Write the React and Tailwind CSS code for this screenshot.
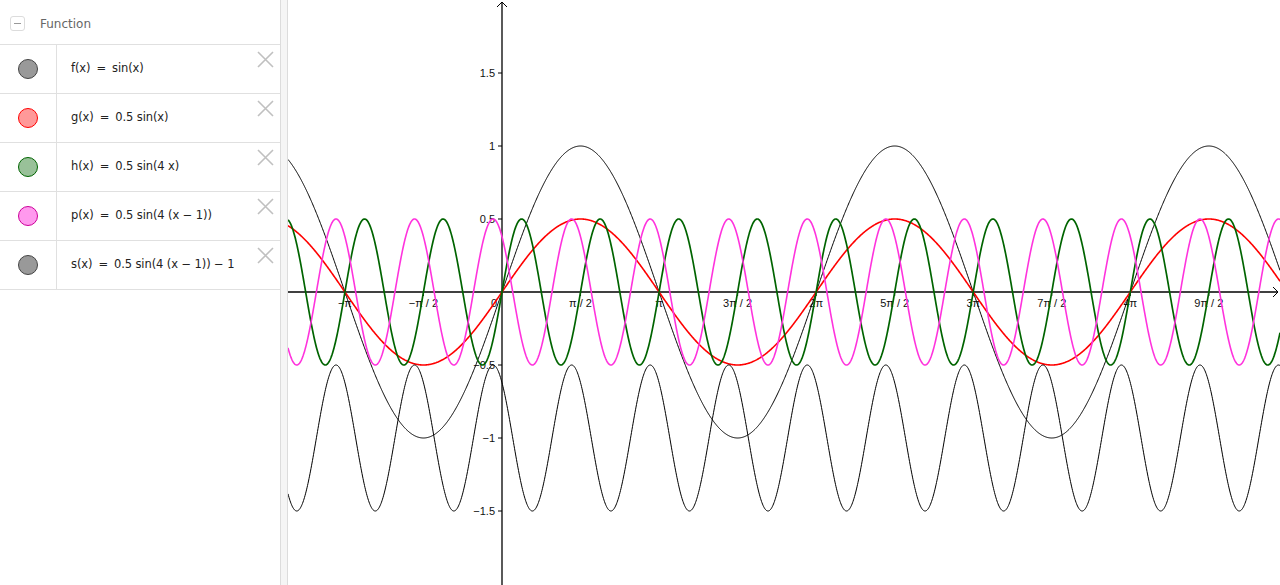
import React from 'react';

const W = 992;
const H = 585;
const OX = 214; // origin x inside the graph view
const OY = 292;
const SX = 50; // px per unit on x
const SY = 146; // px per unit on y

const funcs = [
  { lhs: 'f(x)', rhs: 'sin(x)', fn: (x) => Math.sin(x), stroke: '#000000', width: 1, fill: '#999999', border: '#444444' },
  { lhs: 'g(x)', rhs: '0.5 sin(x)', fn: (x) => 0.5 * Math.sin(x), stroke: '#ff0000', width: 1.6, fill: '#ff9999', border: '#ff0000' },
  { lhs: 'h(x)', rhs: '0.5 sin(4 x)', fn: (x) => 0.5 * Math.sin(4 * x), stroke: '#006400', width: 1.7, fill: '#99c199', border: '#006400' },
  { lhs: 'p(x)', rhs: '0.5 sin(4 (x − 1))', fn: (x) => 0.5 * Math.sin(4 * (x - 1)), stroke: '#ff33dd', width: 1.6, fill: '#ff99ee', border: '#cc0099' },
  { lhs: 's(x)', rhs: '0.5 sin(4 (x − 1)) − 1', fn: (x) => 0.5 * Math.sin(4 * (x - 1)) - 1, stroke: '#000000', width: 1, fill: '#999999', border: '#444444' },
];

function pathFor(fn) {
  let d = '';
  for (let px = 0; px <= W; px += 0.5) {
    const x = (px - OX) / SX;
    const py = OY - fn(x) * SY;
    d += (px === 0 ? 'M' : 'L') + px.toFixed(1) + ' ' + py.toFixed(2) + ' ';
  }
  return d;
}

const xLabels = ['−π', '−π / 2', '0', 'π / 2', 'π', '3π / 2', '2π', '5π / 2', '3π', '7π / 2', '4π', '9π / 2'];
const yLabels = [
  { v: 1.5, t: '1.5' },
  { v: 1, t: '1' },
  { v: 0.5, t: '0.5' },
  { v: -0.5, t: '−0.5' },
  { v: -1, t: '−1' },
  { v: -1.5, t: '−1.5' },
];

function Graph() {
  return (
    <svg width={W} height={H} className="block" style={{ fontFamily: '"Liberation Sans", Arial, sans-serif' }}>
      {/* axes */}
      <line x1="0" y1={OY} x2={W - 2} y2={OY} stroke="#000" strokeWidth="1.3" />
      <path d={`M${W - 7} ${OY - 5} L${W - 2} ${OY} L${W - 7} ${OY + 5}`} fill="none" stroke="#000" strokeWidth="1" />
      <line x1={OX} y1="2" x2={OX} y2={H} stroke="#000" strokeWidth="1.3" />
      <path d={`M${OX - 5} 7 L${OX} 2 L${OX + 5} 7`} fill="none" stroke="#000" strokeWidth="1" />

      {xLabels.map((t, i) => {
        const k = i - 2;
        const px = OX + (k * Math.PI / 2) * SX;
        return (
          <g key={t}>
            {k !== 0 && <line x1={px} y1={OY} x2={px} y2={OY + 4} stroke="#000" strokeWidth="1" />}
            <text x={k === 0 ? OX - 8 : px} y={OY + 15} fontSize="11" textAnchor="middle" fill="#111">{t}</text>
          </g>
        );
      })}
      {yLabels.map((l) => {
        const py = OY - l.v * SY;
        return (
          <g key={l.t}>
            <line x1={OX - 4} y1={py} x2={OX} y2={py} stroke="#000" strokeWidth="1" />
            <text x={OX - 7} y={py + 4} fontSize="11" textAnchor="end" fill="#111">{l.t}</text>
          </g>
        );
      })}

      {funcs.map((f) => (
        <path key={f.lhs} d={pathFor(f.fn)} fill="none" stroke={f.stroke} strokeWidth={f.width} strokeLinejoin="round" />
      ))}
    </svg>
  );
}

function CloseIcon() {
  return (
    <svg width="17" height="17" viewBox="0 0 17 17" className="block">
      <path d="M1 1 L16 16 M16 1 L1 16" stroke="#c0c0c0" strokeWidth="1.6" />
    </svg>
  );
}

export default function App() {
  return (
    <div className="flex w-[1280px] h-[585px] overflow-hidden bg-white" style={{ fontFamily: '"DejaVu Sans", "Liberation Sans", sans-serif' }}>
      <div className="w-[280px] shrink-0 flex flex-col">
        <div className="h-[45px] flex items-center border-b border-[#e0e0e0] px-[10px] pt-[3px] gap-[15px]">
          <div className="w-[15px] h-[15px] rounded-[3px] border border-[#dcdcdc] flex items-center justify-center">
            <div className="w-[7px] h-px bg-[#999]" />
          </div>
          <span className="text-[12px] text-[#666]">Function</span>
        </div>
        {funcs.map((f) => (
          <div key={f.lhs} className="h-[49px] flex border-b border-[#e0e0e0]">
            <div className="w-[57px] shrink-0 border-r border-[#e0e0e0] flex items-center justify-center">
              <div className="w-[20px] h-[20px] rounded-full border" style={{ backgroundColor: f.fill, borderColor: f.border }} />
            </div>
            <div className="flex-1 flex items-center pl-[14px] text-[11.5px] tracking-[-0.1px] text-[#222] whitespace-pre">
              <span>{f.lhs}</span>
              <span className="mx-[6px]">=</span>
              <span>{f.rhs}</span>
            </div>
            <div className="pt-[6px] pr-[6px]">
              <CloseIcon />
            </div>
          </div>
        ))}
      </div>
      <div className="w-[8px] shrink-0 bg-[#f5f5f5] border-x border-[#dcdcdc]" />
      <Graph />
    </div>
  );
}
